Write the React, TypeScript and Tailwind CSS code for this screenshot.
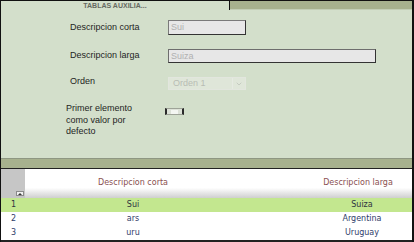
import React from 'react';
import { ChevronDown } from 'lucide-react';

const rows = [
  { n: 1, corta: 'Sui', larga: 'Suiza', selected: true },
  { n: 2, corta: 'ars', larga: 'Argentina', selected: false },
  { n: 3, corta: 'uru', larga: 'Uruguay', selected: false },
];

const label = "text-[9px] text-[#1e1e1e] font-['Liberation_Sans',Arial,sans-serif]";

const App: React.FC = () => {
  return (
    <div className="w-[414px] h-[242px] overflow-hidden bg-white border-t border-l border-r-2 border-[#111] font-['DejaVu_Sans',Verdana,sans-serif]">
      {/* tab strip */}
      <div className="flex h-[9px]">
        <div className="w-[228px] bg-[#d3dfcb] flex items-center justify-center">
          <span className="text-[7px] font-bold leading-none text-[#666a62] font-['Liberation_Sans',Arial,sans-serif]">TABLAS AUXILIA...</span>
        </div>
        <div className="w-px bg-[#111]" />
        <div className="flex-1 bg-[#a7b18e] border-b border-[#c3ceb6]" />
      </div>

      {/* form panel */}
      <div className="h-[148px] bg-[#d3dfcb] flex flex-col">
        <div className="mt-[10px] h-[15px] flex items-center pl-[69px]">
          <span className={`w-[98px] ${label}`}>Descripcion corta</span>
          <div className="w-[78px] h-[15px] bg-[#e7e7e7] border border-[#7a7a7a] border-r-[#333] border-b-[#333] flex items-center px-[2px]">
            <span className="text-[9px] leading-none text-[#b0b0b0] font-['Liberation_Sans',Arial,sans-serif]">Sui</span>
          </div>
        </div>

        <div className="mt-[14px] h-[14px] flex items-center pl-[69px]">
          <span className={`w-[98px] ${label}`}>Descripcion larga</span>
          <div className="w-[208px] h-[14px] bg-[#e7e7e7] border border-[#6e6e6e] border-r-[#333] border-b-[#333] flex items-center px-[2px]">
            <span className="text-[9px] leading-none text-[#b0b0b0] font-['Liberation_Sans',Arial,sans-serif]">Suiza</span>
          </div>
        </div>

        <div className="mt-[14px] h-[13px] flex items-center pl-[69px]">
          <span className={`w-[98px] -mt-[4px] ${label}`}>Orden</span>
          <div className="w-[78px] h-[13px] bg-[#dfe6d9] border border-[#e2e6de] flex items-center">
            <span className="flex-1 pl-[4px] text-[9px] leading-none text-[#b8bcb4] font-['Liberation_Sans',Arial,sans-serif]">Orden 1</span>
            <div className="w-[13px] h-full flex items-center justify-center border-l border-[#e6eae2]">
              <ChevronDown size={8} strokeWidth={2} color="#b8bcb4" />
            </div>
          </div>
        </div>

        <div className="mt-[13px] flex pl-[65px]">
          <span className={`w-[99px] leading-[11.5px] ${label}`}>
            Primer elemento
            <br />
            como valor por
            <br />
            defecto
          </span>
          <div className="mt-[5px] w-[19px] h-[7px] bg-[#dde2d8] border-x-2 border-x-[#2a2a2a] border-y border-y-[#9ea398] flex items-center justify-center">
            <div className="w-[7px] h-[4px] bg-[#f4f6f2]" />
          </div>
        </div>
      </div>

      {/* separator band */}
      <div className="h-px bg-[#8e9782]" />
      <div className="h-[9px] bg-[#a7b18e]" />
      <div className="h-px bg-[#222]" />

      {/* grid */}
      <div className="grid grid-cols-[24px_216px_1fr_100px] text-[8px] leading-none">
        <div className="h-[29px] bg-[#c6c6c6] flex items-end justify-end pr-[1px] pb-[2px]">
          <div className="w-[8px] h-[5px] bg-[#f2f2f2] border border-[#8a8a8a] flex items-center justify-center">
            <div className="w-0 h-0 border-x-[2px] border-x-transparent border-b-[2px] border-b-[#333]" />
          </div>
        </div>
        <div className="h-[29px] bg-linear-to-b from-white from-65% to-[#cfcfcf] flex items-center justify-center pb-[1px] text-[#8a5050]">
          Descripcion corta
        </div>
        <div className="h-[29px] bg-linear-to-b from-white from-65% to-[#cfcfcf]" />
        <div className="h-[29px] bg-linear-to-b from-white from-65% to-[#cfcfcf] flex items-center justify-center pb-[1px] pr-[8px] text-[#8a5050]">
          Descripcion larga
        </div>

        {rows.map((r) => {
          const bg = r.selected ? 'bg-[#c3e78f]' : 'bg-white';
          const txt = r.selected ? 'text-[#2e3440]' : 'text-[#2f3c6a]';
          return (
            <React.Fragment key={r.n}>
              <div className={`h-[14px] flex items-center pl-[10px] ${bg} ${txt}`}>{r.n}</div>
              <div className={`h-[14px] flex items-center justify-center ${bg} ${txt}`}>{r.corta}</div>
              <div className={`h-[14px] ${bg}`} />
              <div className={`h-[14px] flex items-center justify-center ${bg} ${txt}`}>{r.larga}</div>
            </React.Fragment>
          );
        })}
      </div>
      <div className="h-[2px] bg-[#222]" />
    </div>
  );
};

export default App;
